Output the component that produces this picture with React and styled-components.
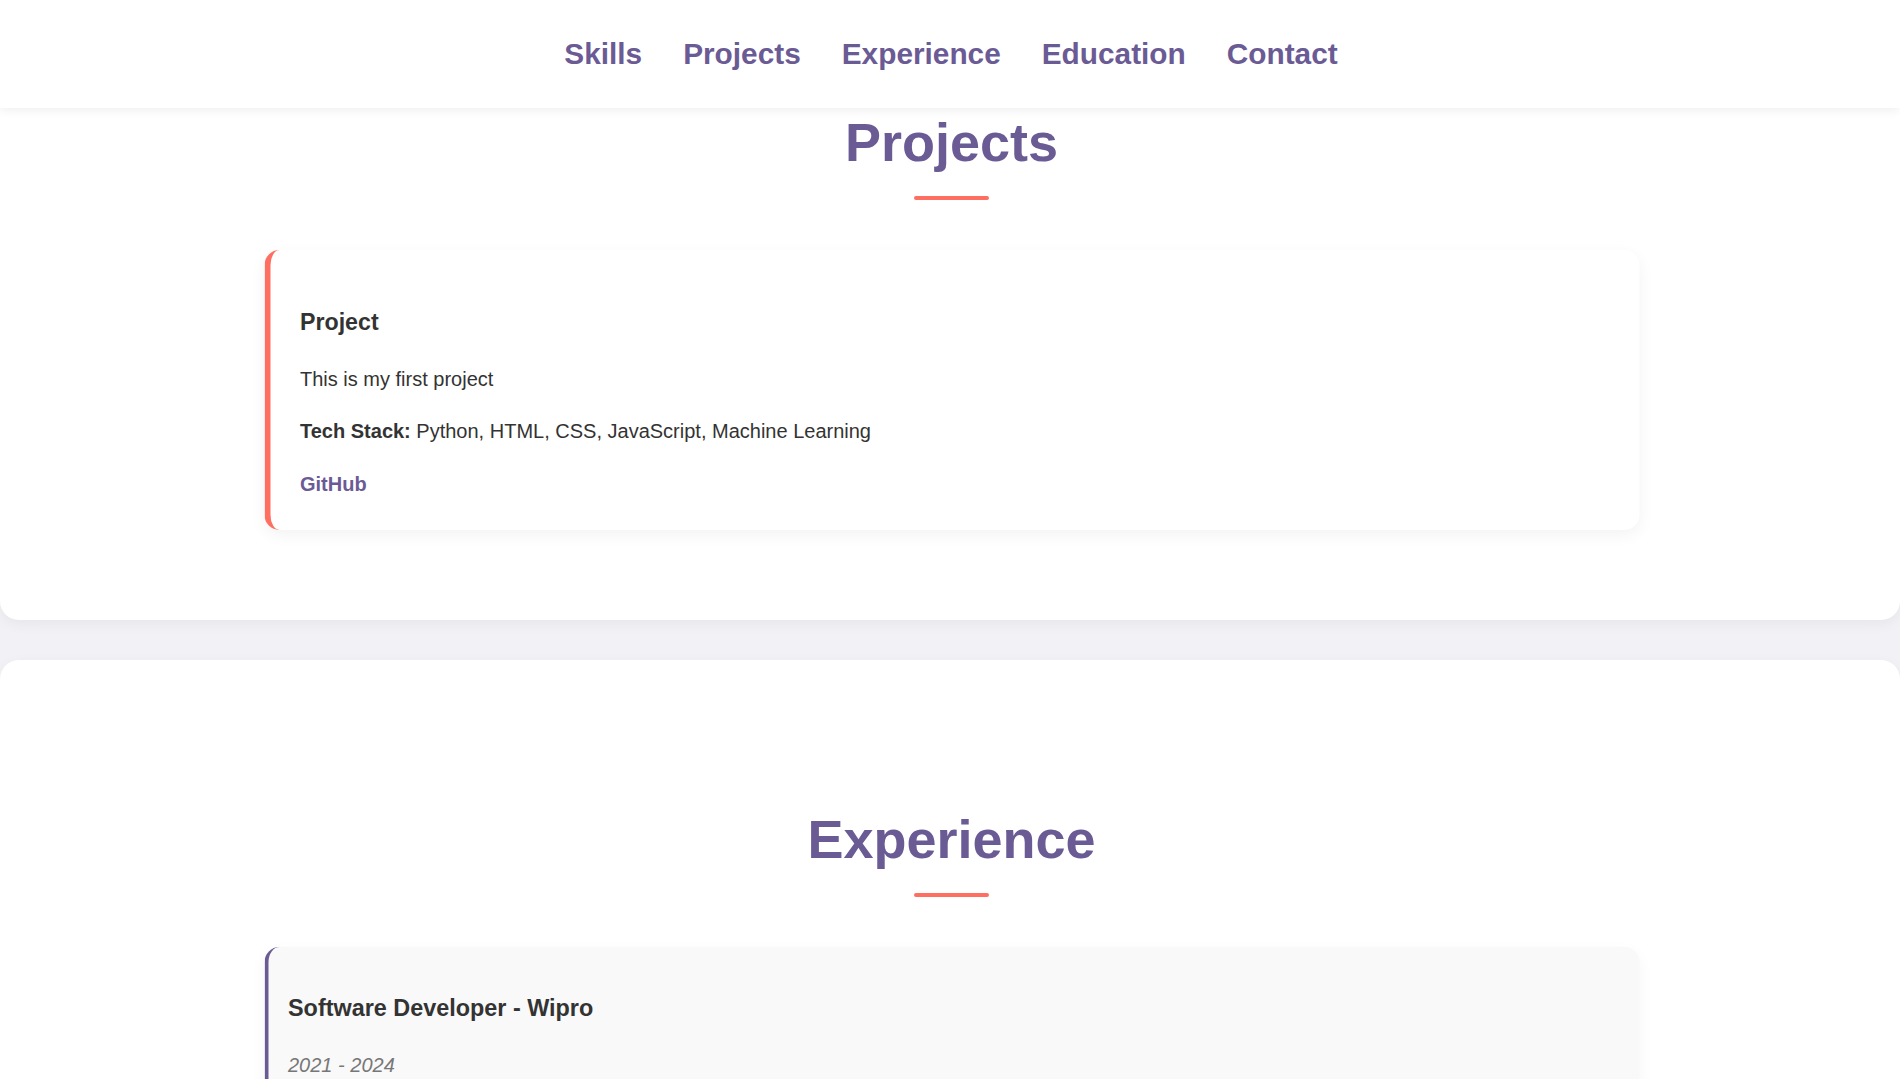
import React from 'react';
import styled, { createGlobalStyle } from 'styled-components';

const purple = '#6b5b95';
const coral = '#ff6f61';

const projects = [
  {
    title: 'Project',
    description: 'This is my first project',
    stack: 'Python, HTML, CSS, JavaScript, Machine Learning',
  },
];

const jobs = [{ title: 'Software Developer - Wipro', period: '2021 - 2024' }];

export default function App() {
  return (
    <>
      <GlobalStyle />
      <NavBar>
        {['Skills', 'Projects', 'Experience', 'Education', 'Contact'].map((item) => (
          <NavLink key={item} href={`#${item.toLowerCase()}`}>
            {item}
          </NavLink>
        ))}
      </NavBar>

      <Section id="projects" $padTop={3} $flatTop>
        <Heading>Projects</Heading>
        <Underline />
        <Content>
          {projects.map((p) => (
            <ProjectCard key={p.title}>
              <CardTitle>{p.title}</CardTitle>
              <Text>{p.description}</Text>
              <Text>
                <strong>Tech Stack:</strong> {p.stack}
              </Text>
              <Text>
                <RepoLink href="#">GitHub</RepoLink>
              </Text>
            </ProjectCard>
          ))}
        </Content>
      </Section>

      <Section id="experience" $padTop={148}>
        <Heading>Experience</Heading>
        <Underline />
        <Content>
          {jobs.map((job) => (
            <JobCard key={job.title}>
              <JobTitle>{job.title}</JobTitle>
              <Period>{job.period}</Period>
            </JobCard>
          ))}
        </Content>
      </Section>
    </>
  );
}

const GlobalStyle = createGlobalStyle`
  * {
    box-sizing: border-box;
  }

  body {
    margin: 0;
    background: #f2f1f6;
    color: #333;
    font-family: "Liberation Sans", Arial, sans-serif;
    overflow: hidden;
  }
`;

const NavBar = styled.nav`
  position: sticky;
  top: 0;
  z-index: 10;
  height: 108px;
  background: #ffffff;
  box-shadow: 0 2px 10px rgba(0, 0, 0, 0.07);
  display: flex;
  justify-content: center;
  align-items: center;
  gap: 41px;
  padding-left: 2px;
`;

const NavLink = styled.a`
  color: ${purple};
  font-size: 29.8px;
  font-weight: bold;
  text-decoration: none;
`;

const Section = styled.section`
  background: #ffffff;
  border-radius: ${({ $flatTop }) => ($flatTop ? '0 0 19px 19px' : '19px')};
  box-shadow: 0 4px 14px rgba(0, 0, 0, 0.05);
  padding: ${({ $padTop }) => $padTop}px 0 90px;
  margin-bottom: 40px;
`;

const Heading = styled.h2`
  margin: 0;
  text-align: center;
  color: ${purple};
  font-size: 54px;
  line-height: 63px;
  font-weight: bold;
  padding-left: 3px;
`;

const Underline = styled.div`
  width: 75px;
  height: 4px;
  border-radius: 2px;
  background: ${coral};
  margin: 22px auto 50px;
  position: relative;
  left: 1.5px;
`;

const Content = styled.div`
  width: 1375px;
  margin: 0 auto;
  transform: translateX(1.5px);
`;

const ProjectCard = styled.article`
  background: #ffffff;
  border-left: 6px solid ${coral};
  border-radius: 15px;
  box-shadow: 0 5px 16px rgba(0, 0, 0, 0.05);
  padding: 30px;
`;

const CardTitle = styled.h3`
  margin: 24px 0 22.5px;
  font-size: 23.2px;
  line-height: 36px;
  font-weight: bold;
  color: #333;
`;

const Text = styled.p`
  margin: 0 0 20.5px;
  font-size: 20px;
  line-height: 32px;

  &:last-child {
    margin-bottom: 0;
  }

  strong {
    font-weight: bold;
  }
`;

const RepoLink = styled.a`
  color: ${purple};
  font-weight: bold;
  text-decoration: none;
`;

const JobCard = styled.article`
  background: #f9f9f9;
  border-left: 4px solid ${purple};
  border-radius: 15px;
  box-shadow: 0 5px 16px rgba(0, 0, 0, 0.04);
  padding: 20px;
`;

const JobTitle = styled.h3`
  margin: 23px 0 23px;
  font-size: 23.4px;
  line-height: 36px;
  font-weight: bold;
  color: #333;
`;

const Period = styled.p`
  margin: 0;
  font-size: 20px;
  line-height: 32px;
  font-style: italic;
  color: #777;
`;
